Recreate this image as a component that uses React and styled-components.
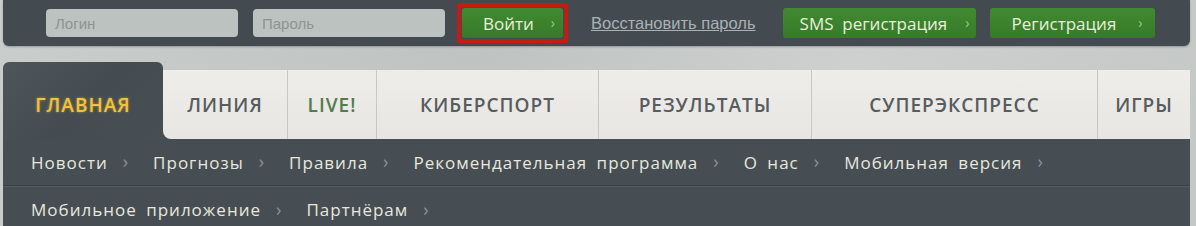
import React from 'react';
import styled, { createGlobalStyle } from 'styled-components';

const GlobalStyle = createGlobalStyle`
  html, body {
    margin: 0;
    padding: 0;
    background: #c6cac9;
  }
  body {
    font-family: "Open Sans", "Liberation Sans", sans-serif;
  }
`;

const Page = styled.div`
  width: 1196px;
  height: 226px;
  overflow: hidden;
  padding: 0 6px 0 3px;
  box-sizing: border-box;
  background: linear-gradient(100deg, #c9cdcc 0%, #bfc4c3 40%, #cdd0cf 70%, #c4c8c7 100%);
`;

const TopBar = styled.div`
  height: 46px;
  background: #434b50;
  border-radius: 0 0 6px 6px;
  display: flex;
  align-items: center;
  padding-left: 43px;
  box-shadow: 0 1px 2px rgba(0, 0, 0, 0.25);
`;

const Field = styled.input`
  width: 192px;
  height: 28px;
  box-sizing: border-box;
  margin-right: 15px;
  border: none;
  border-radius: 4px;
  background: #bcc2bf;
  padding: 0 9px;
  font-family: "Liberation Sans", Arial, sans-serif;
  font-size: 15px;
  color: #555;
  outline: none;

  &::placeholder {
    color: #8d9592;
  }
`;

const Highlight = styled.div`
  border: 4px solid #c21d14;
  border-radius: 2px;
  padding: 1px;
  margin-left: -3px;
  display: flex;
`;

const GreenButton = styled.button`
  width: ${(p) => p.$w}px;
  height: 30px;
  margin-left: ${(p) => p.$ml || 0}px;
  border: none;
  border-radius: 3px;
  background: linear-gradient(#418a31, #377a29);
  color: #e6f0dc;
  font-family: "Open Sans", "Liberation Sans", sans-serif;
  font-size: 17px;
  display: flex;
  align-items: center;
  padding: 0 ${(p) => p.$pr}px 0 ${(p) => p.$pl}px;
  box-sizing: border-box;
  cursor: pointer;
`;

const Chevron = styled.span`
  margin-left: auto;
  font-size: 14px;
  color: #9cc88a;
  margin-top: -2px;
`;

const RestoreLink = styled.a`
  margin-left: 23px;
  color: #a9b1b5;
  font-family: "Liberation Sans", Arial, sans-serif;
  font-size: 16.5px;
  text-decoration: underline;
  cursor: pointer;
`;

const TabRow = styled.div`
  margin-top: 16px;
  display: flex;
  align-items: flex-end;
  height: 77px;
  background: linear-gradient(to bottom, transparent 0, transparent 60px, #454d52 60px);
`;

const ActiveTab = styled.div`
  width: 160px;
  height: 77px;
  background: linear-gradient(135deg, #4e565b, #444c51 50%, #484f54);
  border-radius: 6px 6px 0 0;
  display: flex;
  align-items: center;
  justify-content: center;
  padding-top: 8px;
  box-sizing: border-box;
  font-size: 19px;
  font-weight: 600;
  letter-spacing: 1px;
  color: #f1c23e;
  text-shadow: 0 0 3px rgba(255, 196, 40, 0.55);
`;

const TabStrip = styled.div`
  flex: 1;
  height: 69px;
  display: flex;
  background: linear-gradient(#efedea, #e8e6e3);
  border-radius: 0 0 0 8px;
`;

const Tab = styled.div`
  width: ${(p) => p.$w}px;
  display: flex;
  align-items: center;
  justify-content: center;
  font-size: 19px;
  font-weight: 600;
  letter-spacing: 1px;
  color: ${(p) => (p.$live ? '#527c4c' : '#575c5e')};
  border-left: ${(p) => (p.$first ? 'none' : '1px solid #c9c7c4')};
  box-sizing: border-box;
`;

const SubNav = styled.div`
  background: #464e53;
  height: 87px;
  overflow: hidden;
`;

const SubRow = styled.div`
  display: flex;
  align-items: center;
  height: ${(p) => p.$h}px;
  padding-left: 28px;
  box-sizing: border-box;
  border-bottom: ${(p) => (p.$line ? '1px solid #3b4246' : 'none')};
  box-shadow: ${(p) => (p.$line ? '0 1px 0 #535b60' : 'none')};
`;

const SubLink = styled.a`
  color: #e7e7de;
  font-size: 17px;
  letter-spacing: 1px;
  word-spacing: 4px;
  cursor: pointer;
`;

const SubArrow = styled.span`
  color: #8b9195;
  font-size: 18px;
  margin: -2px 25px 0 15px;
`;

const tabs = [
  { label: 'ЛИНИЯ', w: 124 },
  { label: 'LIVE!', w: 89, live: true },
  { label: 'КИБЕРСПОРТ', w: 222 },
  { label: 'РЕЗУЛЬТАТЫ', w: 213 },
  { label: 'СУПЕРЭКСПРЕСС', w: 286 },
  { label: 'ИГРЫ', w: 93 },
];

const row1 = ['Новости', 'Прогнозы', 'Правила', 'Рекомендательная программа', 'О нас', 'Мобильная версия'];
const row2 = ['Мобильное приложение', 'Партнёрам'];

const App = () => {
  return (
    <Page>
      <GlobalStyle />
      <TopBar>
        <Field placeholder="Логин" />
        <Field placeholder="Пароль" />
        <Highlight>
          <GreenButton $w={101} $pl={21} $pr={8}>
            Войти <Chevron>›</Chevron>
          </GreenButton>
        </Highlight>
        <RestoreLink>Восстановить пароль</RestoreLink>
        <GreenButton $w={193} $ml={27} $pl={17} $pr={6}>
          SMS&nbsp; регистрация <Chevron>›</Chevron>
        </GreenButton>
        <GreenButton $w={165} $ml={14} $pl={22} $pr={12}>
          Регистрация <Chevron>›</Chevron>
        </GreenButton>
      </TopBar>

      <TabRow>
        <ActiveTab>ГЛАВНАЯ</ActiveTab>
        <TabStrip>
          {tabs.map((t, i) => (
            <Tab key={t.label} $w={t.w} $live={t.live} $first={i === 0}>
              {t.label}
            </Tab>
          ))}
        </TabStrip>
      </TabRow>

      <SubNav>
        <SubRow $h={47} $line>
          {row1.map((item) => (
            <React.Fragment key={item}>
              <SubLink>{item}</SubLink>
              <SubArrow>›</SubArrow>
            </React.Fragment>
          ))}
        </SubRow>
        <SubRow $h={47}>
          {row2.map((item) => (
            <React.Fragment key={item}>
              <SubLink>{item}</SubLink>
              <SubArrow>›</SubArrow>
            </React.Fragment>
          ))}
        </SubRow>
      </SubNav>
    </Page>
  );
};

export default App;
